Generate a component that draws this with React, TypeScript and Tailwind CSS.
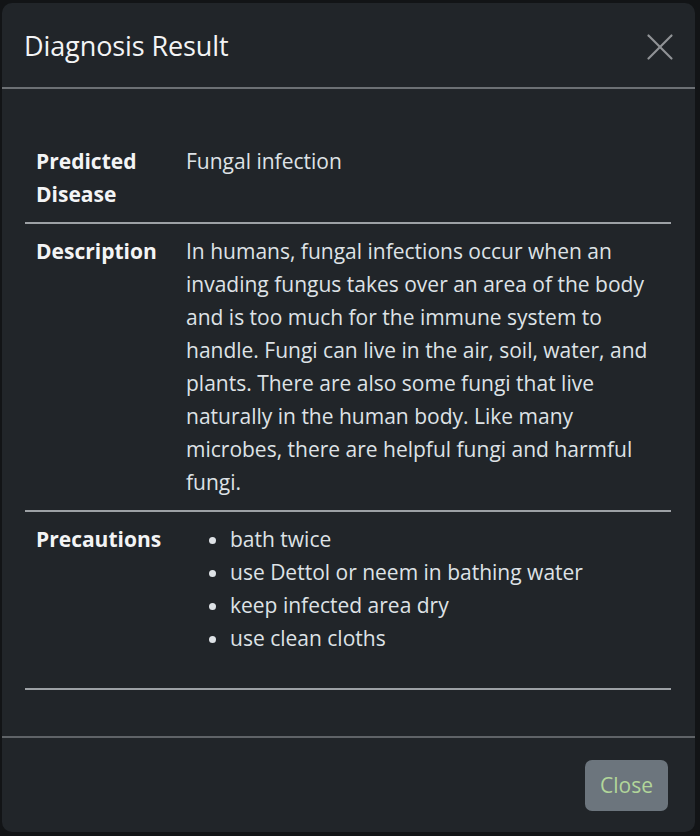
import { X } from "lucide-react";

const description =
  "In humans, fungal infections occur when an invading fungus takes over an area of the body and is too much for the immune system to handle. Fungi can live in the air, soil, water, and plants. There are also some fungi that live naturally in the human body. Like many microbes, there are helpful fungi and harmful fungi.";

const precautions = ["bath twice", "use Dettol or neem in bathing water", "keep infected area dry", "use clean cloths"];

export default function App() {
  return (
    <div className="min-h-screen bg-[#121416] pt-[3px] pl-[2px] font-['Open_Sans',sans-serif] text-[#dee2e6]">
      <div className="w-[693px] h-[829px] bg-[#212529] rounded-[10px] flex flex-col overflow-hidden">
        {/* header */}
        <div className="h-[86px] flex items-center justify-between pl-[22px] pr-[12px] border-b-2 border-[#6c7074]">
          <h5 className="text-[27px] font-medium text-[#f3f4f5] tracking-[-0.1px] pt-[3px]">Diagnosis Result</h5>
          <button className="text-[#909396] pt-[3px]">
            <X size={46} strokeWidth={1.15} />
          </button>
        </div>

        {/* body */}
        <div className="flex-1 px-[23px] pt-[45px]">
          <table className="w-[646px] border-collapse text-[21px] leading-[33px]">
            <tbody>
              <tr className="border-b-2 border-[#9da1a5]">
                <th className="w-[150px] text-left align-top font-bold text-[#f3f4f5] px-[11px] py-[11px]">
                  Predicted
                  <br />
                  Disease
                </th>
                <td className="align-top px-[11px] py-[11px]">Fungal infection</td>
              </tr>
              <tr className="border-b-2 border-[#9da1a5]">
                <th className="text-left align-top font-bold text-[#f3f4f5] px-[11px] py-[11px]">Description</th>
                <td className="align-top px-[11px] py-[11px]">{description}</td>
              </tr>
              <tr className="border-b-2 border-[#9da1a5]">
                <th className="text-left align-top font-bold text-[#f3f4f5] px-[11px] py-[11px]">Precautions</th>
                <td className="align-top px-[11px] py-[11px]">
                  <ul className="list-disc pl-[44px] mb-[22px]">
                    {precautions.map((p) => (
                      <li key={p}>{p}</li>
                    ))}
                  </ul>
                </td>
              </tr>
            </tbody>
          </table>
        </div>

        {/* footer */}
        <div className="border-t-2 border-[#5f6367] flex justify-end px-[27px] pt-[22px] pb-[21px]">
          <button className="bg-[#6c757d] text-[#b2d69a] text-[21px] leading-[33px] px-[15px] py-[9px] rounded-[7px]">
            Close
          </button>
        </div>
      </div>
    </div>
  );
}
